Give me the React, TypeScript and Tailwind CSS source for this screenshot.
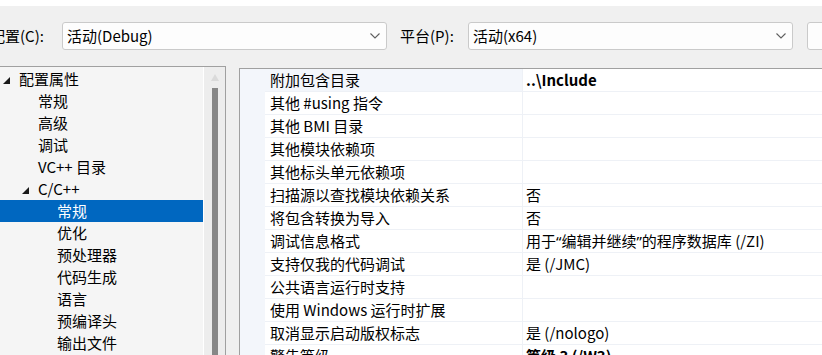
import React from 'react';

const Chevron = () => (
  <svg width="10" height="6" viewBox="0 0 10 6" className="shrink-0">
    <path d="M0.5 0.5 L5 5 L9.5 0.5" fill="none" stroke="#5f5f5f" strokeWidth="1.1" />
  </svg>
);

const Expanded = () => (
  <svg width="7" height="7" viewBox="0 0 7 7" className="shrink-0">
    <polygon points="7,0 7,7 0,7" fill="#1a1a1a" />
  </svg>
);

const Combo = ({ value, width }: { value: string; width: string }) => (
  <div
    className={`${width} h-[28px] shrink-0 flex items-center justify-between pl-[4px] pr-[6px] bg-[#fdfdfd] border border-[#cacaca] rounded-[3px]`}
  >
    <span>{value}</span>
    <Chevron />
  </div>
);

const Q = ({ children }: { children: React.ReactNode }) => (
  <span className="font-['Noto_Sans',sans-serif]">{children}</span>
);

const treeItems = [
  { label: '配置属性', indent: 'pl-[3px]', expander: true },
  { label: '常规', indent: 'pl-[38px]' },
  { label: '高级', indent: 'pl-[38px]' },
  { label: '调试', indent: 'pl-[38px]' },
  { label: 'VC++ 目录', indent: 'pl-[38px]' },
  { label: 'C/C++', indent: 'pl-[22px]', expander: true },
  { label: '常规', indent: 'pl-[57px]', selected: true },
  { label: '优化', indent: 'pl-[57px]' },
  { label: '预处理器', indent: 'pl-[57px]' },
  { label: '代码生成', indent: 'pl-[57px]' },
  { label: '语言', indent: 'pl-[57px]' },
  { label: '预编译头', indent: 'pl-[57px]' },
  { label: '输出文件', indent: 'pl-[57px]' },
];

const props: { name: string; value: React.ReactNode; bold?: boolean; current?: boolean }[] = [
  { name: '附加包含目录', value: '..\\Include', bold: true, current: true },
  { name: '其他 #using 指令', value: '' },
  { name: '其他 BMI 目录', value: '' },
  { name: '其他模块依赖项', value: '' },
  { name: '其他标头单元依赖项', value: '' },
  { name: '扫描源以查找模块依赖关系', value: '否' },
  { name: '将包含转换为导入', value: '否' },
  {
    name: '调试信息格式',
    value: (
      <>
        用于<Q>“</Q>编辑并继续<Q>”</Q>的程序数据库 (/ZI)
      </>
    ),
  },
  { name: '支持仅我的代码调试', value: '是 (/JMC)' },
  { name: '公共语言运行时支持', value: '' },
  { name: '使用 Windows 运行时扩展', value: '' },
  { name: '取消显示启动版权标志', value: '是 (/nologo)' },
  { name: '警告等级', value: '等级 3 (/W3)', bold: true },
];

export default function App() {
  return (
    <div className="w-[822px] h-[355px] overflow-hidden bg-[#f0f0f0] text-[15px] leading-[20px] text-black font-['Noto_Sans_CJK_SC',sans-serif]">
      <div className="h-[6px] bg-white" />

      <div className="flex items-center h-[28px] mt-[16px] overflow-hidden">
        <span className="-ml-[10px] w-[72px] shrink-0">配置(C):</span>
        <Combo value="活动(Debug)" width="w-[325px]" />
        <span className="ml-[13px] w-[68px] shrink-0">平台(P):</span>
        <Combo value="活动(x64)" width="w-[325px]" />
        <div className="ml-[14px] w-[40px] h-[28px] shrink-0 bg-[#fdfdfd] border border-[#cacaca] rounded-[3px]" />
      </div>

      <div className="flex mt-[16px] h-[300px]">
        <div className="flex w-[226px] shrink-0 border-t border-r border-[#a0a0a0]">
          <div className="w-[203px] bg-[#f5f5f5] pt-[1px]">
            {treeItems.map((item, i) => (
              <div
                key={i}
                className={`h-[22px] flex items-center ${item.indent} ${
                  item.selected ? 'bg-[#0067c0] text-white' : ''
                }`}
              >
                {item.expander && (
                  <span className="mr-[9px] mt-[2px] flex">
                    <Expanded />
                  </span>
                )}
                <span>{item.label}</span>
              </div>
            ))}
          </div>
          <div className="w-px bg-white" />
          <div className="w-[21px] bg-[#ededed] flex flex-col items-center pt-[7px]">
            <svg width="8" height="7" viewBox="0 0 8 7">
              <polygon points="4,0 8,7 0,7" fill="#dadada" />
            </svg>
            <div className="mt-[7px] w-[6px] flex-1 bg-[#878787]" />
          </div>
        </div>

        <div className="ml-[13px] mt-[2px] flex-1 flex border-t border-l border-[#a0a0a0] bg-white">
          <div className="w-[25px] shrink-0 bg-[#f3f6fb]" />
          <div className="flex-1">
            {props.map((p, i) => (
              <div key={i} className="h-[23px] flex border-b border-[#eef1f6]">
                <div
                  className={`w-[258px] shrink-0 pl-[5px] flex items-center border-r border-[#eef1f6] ${
                    p.current ? 'bg-[#f3f6fb]' : ''
                  }`}
                >
                  {p.name}
                </div>
                <div className={`flex-1 pl-[3px] flex items-center whitespace-pre ${p.bold ? 'font-bold' : ''}`}>
                  {p.value}
                </div>
              </div>
            ))}
          </div>
        </div>
      </div>
    </div>
  );
}
